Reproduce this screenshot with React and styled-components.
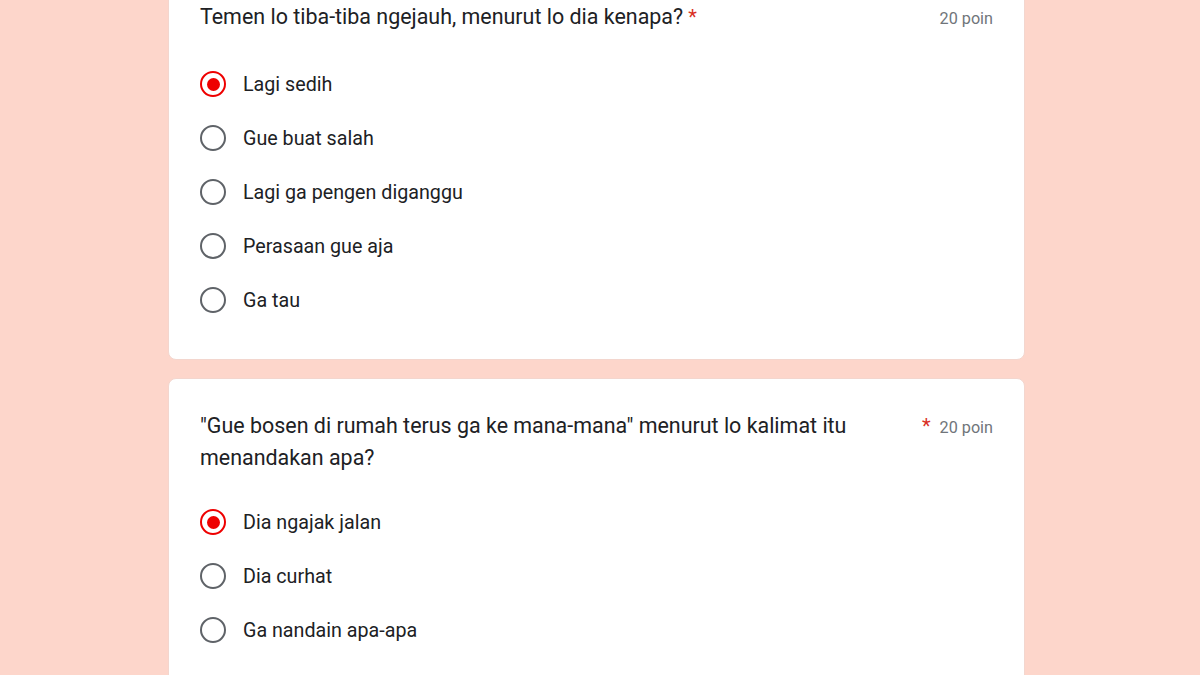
import React from "react";
import styled, { createGlobalStyle } from "styled-components";

const GlobalStyle = createGlobalStyle`
  html, body {
    margin: 0;
    padding: 0;
    background: #fdd6cb;
    font-family: Roboto, "Liberation Sans", Arial, sans-serif;
    overflow: hidden;
  }
`;

const Page = styled.main`
  display: flex;
  flex-direction: column;
  gap: 18px;
  margin-top: -31px;
  padding-left: 168px;
`;

const Card = styled.section`
  width: 857px;
  box-sizing: border-box;
  background: #fff;
  border-radius: 8px;
  border: 1px solid #f3d6ce;
  padding: 31px 31px 32px;
  display: flex;
  flex-direction: column;
  gap: ${(p) => p.$gap}px;
`;

const Header = styled.div`
  display: flex;
  align-items: flex-start;
  gap: 8px;
`;

const TitleWrap = styled.div`
  flex: 1;
  display: flex;
  align-items: flex-start;
  gap: 5px;
`;

const Title = styled.span`
  font-size: 21.45px;
  line-height: 32px;
  color: #202124;
`;

const Required = styled.span`
  color: #d93025;
  font-size: 20px;
  line-height: 32px;
  margin-right: 1px;
`;

const Points = styled.span`
  font-size: 16.2px;
  line-height: 32px;
  color: #70757a;
  white-space: nowrap;
  padding-top: 2px;
`;

const Options = styled.div`
  display: flex;
  flex-direction: column;
`;

const Option = styled.label`
  display: flex;
  align-items: center;
  gap: 17px;
  height: 54px;
  font-size: 19.7px;
  color: #202124;
`;

const Radio = styled.span`
  width: 26px;
  height: 26px;
  box-sizing: border-box;
  border-radius: 50%;
  border: 2.5px solid ${(p) => (p.$checked ? "#ee0000" : "#5f6368")};
  display: flex;
  align-items: center;
  justify-content: center;
  flex-shrink: 0;
  &::after {
    content: "";
    width: 13px;
    height: 13px;
    border-radius: 50%;
    background: #ee0000;
    display: ${(p) => (p.$checked ? "block" : "none")};
  }
`;

const questions = [
  {
    title: "Temen lo tiba-tiba ngejauh, menurut lo dia kenapa?",
    gap: 22,
    options: ["Lagi sedih", "Gue buat salah", "Lagi ga pengen diganggu", "Perasaan gue aja", "Ga tau"],
    selected: 0,
  },
  {
    title: "\"Gue bosen di rumah terus ga ke mana-mana\" menurut lo kalimat itu menandakan apa?",
    gap: 21,
    options: ["Dia ngajak jalan", "Dia curhat", "Ga nandain apa-apa"],
    selected: 0,
  },
];

function Question({ q }) {
  return (
    <Card $gap={q.gap}>
      <Header>
        <TitleWrap>
          <Title>{q.title}</Title>
          <Required>*</Required>
        </TitleWrap>
        <Points>20 poin</Points>
      </Header>
      <Options>
        {q.options.map((opt, i) => (
          <Option key={opt}>
            <Radio $checked={i === q.selected} />
            {opt}
          </Option>
        ))}
      </Options>
    </Card>
  );
}

export default function App() {
  return (
    <>
      <GlobalStyle />
      <Page>
        {questions.map((q) => (
          <Question key={q.title} q={q} />
        ))}
      </Page>
    </>
  );
}
